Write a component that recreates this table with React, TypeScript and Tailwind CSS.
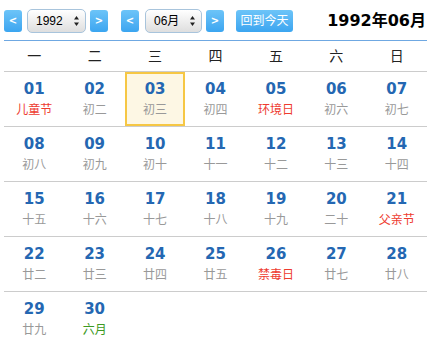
import React from 'react';

type Day = { d: string; lunar: string; tone?: 'red' | 'green' };

const days: Day[] = [
  { d: '01', lunar: '儿童节', tone: 'red' },
  { d: '02', lunar: '初二' },
  { d: '03', lunar: '初三' },
  { d: '04', lunar: '初四' },
  { d: '05', lunar: '环境日', tone: 'red' },
  { d: '06', lunar: '初六' },
  { d: '07', lunar: '初七' },
  { d: '08', lunar: '初八' },
  { d: '09', lunar: '初九' },
  { d: '10', lunar: '初十' },
  { d: '11', lunar: '十一' },
  { d: '12', lunar: '十二' },
  { d: '13', lunar: '十三' },
  { d: '14', lunar: '十四' },
  { d: '15', lunar: '十五' },
  { d: '16', lunar: '十六' },
  { d: '17', lunar: '十七' },
  { d: '18', lunar: '十八' },
  { d: '19', lunar: '十九' },
  { d: '20', lunar: '二十' },
  { d: '21', lunar: '父亲节', tone: 'red' },
  { d: '22', lunar: '廿二' },
  { d: '23', lunar: '廿三' },
  { d: '24', lunar: '廿四' },
  { d: '25', lunar: '廿五' },
  { d: '26', lunar: '禁毒日', tone: 'red' },
  { d: '27', lunar: '廿七' },
  { d: '28', lunar: '廿八' },
  { d: '29', lunar: '廿九' },
  { d: '30', lunar: '六月', tone: 'green' },
];

const weekdays = ['一', '二', '三', '四', '五', '六', '日'];

function NavButton({ label }: { label: string }) {
  return (
    <button className="shrink-0 w-[18px] h-[22px] rounded-[3px] bg-gradient-to-b from-[#6cc4f8] to-[#3ba5f0] text-white text-[10px] font-bold leading-none flex items-center justify-center">
      {label}
    </button>
  );
}

function FakeSelect({ value, width }: { value: string; width: string }) {
  return (
    <div
      className={`${width} shrink-0 h-[24px] rounded-[5px] border border-[#a8c4dc] bg-gradient-to-b from-white to-[#dedede] flex items-center justify-between pl-[8px] pr-[6px] text-[12px] text-black`}
      style={{ fontFamily: '"Liberation Sans", "Noto Sans CJK SC", sans-serif' }}
    >
      <span>{value}</span>
      <svg width="5" height="10" viewBox="0 0 5 10">
        <path d="M2.5 0 L5 3.5 L0 3.5 Z" fill="#222" />
        <path d="M0 6.5 L5 6.5 L2.5 10 Z" fill="#222" />
      </svg>
    </div>
  );
}

export default function App() {
  const rows: Day[][] = [];
  for (let i = 0; i < days.length; i += 7) rows.push(days.slice(i, i + 7));

  return (
    <div
      className="w-[431px] h-[346px] bg-white px-[4px] overflow-hidden"
      style={{ fontFamily: '"DejaVu Sans", "Noto Sans CJK SC", sans-serif' }}
    >
      <div className="h-[41px] flex items-center pt-[1px] border-b border-[#6fa8e2]">
        <NavButton label="<" />
        <div className="ml-[5px]">
          <FakeSelect value="1992" width="w-[59px]" />
        </div>
        <div className="ml-[4px]">
          <NavButton label=">" />
        </div>
        <div className="ml-[13px]">
          <NavButton label="<" />
        </div>
        <div className="ml-[6px]">
          <FakeSelect value="06月" width="w-[57px]" />
        </div>
        <div className="ml-[4px]">
          <NavButton label=">" />
        </div>
        <button className="shrink-0 ml-[12px] w-[57px] h-[22px] rounded-[3px] bg-gradient-to-b from-[#6cc4f8] to-[#3ba5f0] text-white text-[12px] leading-none flex items-center justify-center">
          回到今天
        </button>
        <div className="ml-auto pr-[1px] text-[16px] font-bold text-black">1992年06月</div>
      </div>

      <div className="grid grid-cols-7 h-[31px] border-b border-[#cccccc] items-center">
        {weekdays.map((w) => (
          <div key={w} className="text-center text-[14px] text-[#222]">
            {w}
          </div>
        ))}
      </div>

      {rows.map((row, ri) => (
        <div
          key={ri}
          className={`grid grid-cols-7 h-[55px] ${ri < rows.length - 1 ? 'border-b border-[#cccccc]' : ''}`}
        >
          {row.map((day) => {
            const selected = day.d === '03';
            const lunarColor =
              day.tone === 'red' ? 'text-[#ee3b2f]' : day.tone === 'green' ? 'text-[#3c9a22]' : 'text-[#999999]';
            return (
              <div
                key={day.d}
                className={`flex flex-col items-center ${
                  selected ? 'border-2 border-[#f6c744] bg-[#fdf7e4] pt-[5px]' : 'pt-[7px]'
                }`}
              >
                <div className="text-[15px] leading-[20px] font-bold text-[#2467b2]">{day.d}</div>
                <div className={`mt-[3px] text-[12px] leading-[16px] ${lunarColor}`}>{day.lunar}</div>
              </div>
            );
          })}
        </div>
      ))}
    </div>
  );
}
